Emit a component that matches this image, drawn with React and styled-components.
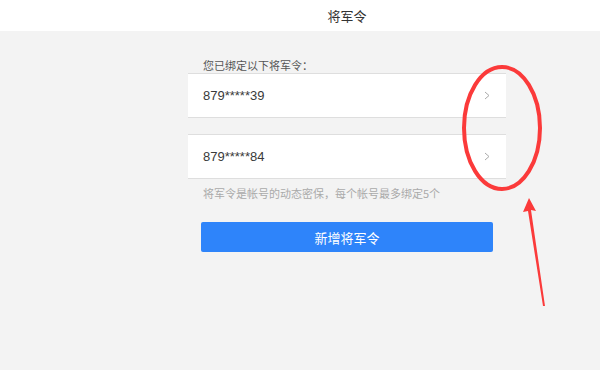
import React from 'react';
import styled, { createGlobalStyle } from 'styled-components';

const GlobalStyle = createGlobalStyle`
  html, body {
    margin: 0;
    padding: 0;
    background: #f3f3f3;
  }
  body {
    font-family: "Noto Sans CJK SC", "Open Sans", sans-serif;
  }
`;

const tokens = ['879*****39', '879*****84'];

const Page = styled.div`
  position: relative;
  width: 600px;
  height: 370px;
  overflow: hidden;
  background: #f3f3f3;
`;

const Header = styled.header`
  height: 31px;
  background: #fff;
  display: flex;
  align-items: center;
  padding-left: 188px;
`;

const Title = styled.h1`
  width: 318px;
  margin: 0 0 1px;
  text-align: center;
  font-size: 13px;
  font-weight: 400;
  color: #333;
`;

const Column = styled.main`
  width: 318px;
  margin-left: 188px;
  padding-top: 26px;
  display: flex;
  flex-direction: column;
`;

const Label = styled.div`
  font-size: 11px;
  line-height: 16px;
  color: #555;
  padding-left: 15px;
`;

const List = styled.div`
  display: flex;
  flex-direction: column;
  gap: 16px;
`;

const Row = styled.div`
  height: 43px;
  background: #fff;
  border-top: 1px solid #dedede;
  border-bottom: 1px solid #dedede;
  display: flex;
  align-items: center;
  justify-content: space-between;
  padding: 0 16px 0 15px;
`;

const Token = styled.span`
  font-family: "Liberation Sans", Arial, sans-serif;
  font-size: 13px;
  color: #3a3a3a;
`;

const Hint = styled.p`
  margin: 7px 0 0;
  padding-left: 15px;
  font-size: 11px;
  line-height: 14px;
  color: #aaa;
`;

const AddButton = styled.button`
  margin: 22px 13px 0;
  height: 30px;
  border: none;
  border-radius: 2px;
  background: #2e84fa;
  color: #fff;
  font-family: inherit;
  font-size: 13px;
  cursor: pointer;
`;

const Annotation = styled.svg`
  position: absolute;
  left: 0;
  top: 0;
  pointer-events: none;
`;

const Chevron = () => (
  <svg width="6" height="9" viewBox="0 0 6 9">
    <path d="M1 1l4 3.5L1 8" fill="none" stroke="#aaa" strokeWidth="1" />
  </svg>
);

export default function App() {
  return (
    <Page>
      <GlobalStyle />
      <Header>
        <Title>将军令</Title>
      </Header>
      <Column>
        <Label>您已绑定以下将军令：</Label>
        <List>
          {tokens.map((t) => (
            <Row key={t}>
              <Token>{t}</Token>
              <Chevron />
            </Row>
          ))}
        </List>
        <Hint>将军令是帐号的动态密保，每个帐号最多绑定5个</Hint>
        <AddButton>新增将军令</AddButton>
      </Column>
      <Annotation width="600" height="370" viewBox="0 0 600 370">
        <ellipse cx="502" cy="128" rx="38" ry="61" fill="none" stroke="#fb3a3a" strokeWidth="4" />
        <path d="M529 198 L536 211 L531 210 L545 306 L543 306 L528 211 L523 212 Z" fill="#fb3a3a" />
      </Annotation>
    </Page>
  );
}
